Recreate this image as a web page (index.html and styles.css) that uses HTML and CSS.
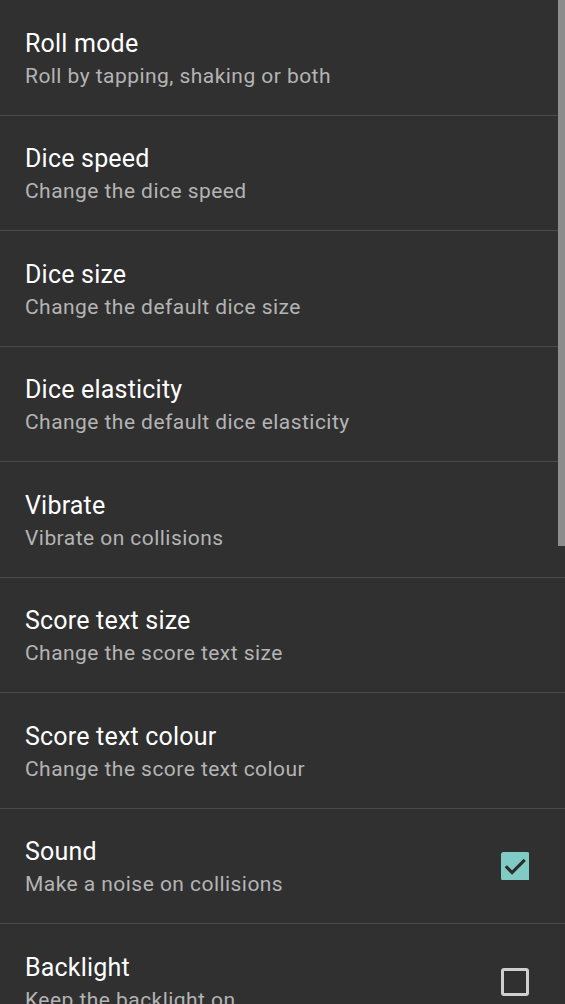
FILE: index.html
```html
<!DOCTYPE html>
<html lang="en">
<head>
<meta charset="utf-8">
<title>Settings</title>
<link rel="stylesheet" href="styles.css">
</head>
<body>
<div class="screen">
  <ul class="prefs">
    <li class="pref"><div class="text"><div class="title">Roll mode</div><div class="summary">Roll by tapping, shaking or both</div></div></li>
    <li class="pref"><div class="text"><div class="title">Dice speed</div><div class="summary">Change the dice speed</div></div></li>
    <li class="pref"><div class="text"><div class="title">Dice size</div><div class="summary">Change the default dice size</div></div></li>
    <li class="pref"><div class="text"><div class="title">Dice elasticity</div><div class="summary">Change the default dice elasticity</div></div></li>
    <li class="pref"><div class="text"><div class="title">Vibrate</div><div class="summary">Vibrate on collisions</div></div></li>
    <li class="pref"><div class="text"><div class="title">Score text size</div><div class="summary">Change the score text size</div></div></li>
    <li class="pref"><div class="text"><div class="title">Score text colour</div><div class="summary">Change the score text colour</div></div></li>
    <li class="pref"><div class="text"><div class="title">Sound</div><div class="summary">Make a noise on collisions</div></div>
      <svg class="check" viewBox="0 0 18 18" aria-hidden="true"><rect x="0" y="0" width="18" height="18" rx="1.6" fill="#80cbc4"/><polyline points="3,9 7,13 15,5" fill="none" stroke="#2c2c2c" stroke-width="2"/></svg>
    </li>
    <li class="pref"><div class="text"><div class="title">Backlight</div><div class="summary">Keep the backlight on</div></div>
      <span class="box"></span>
    </li>
  </ul>
  <div class="scrollthumb"></div>
</div>
</body>
</html>
```

FILE: styles.css
```css
html, body {
  margin: 0;
  padding: 0;
  background: #303030;
  height: 100%;
  overflow: hidden;
}
body {
  font-family: Roboto, "Noto Sans", sans-serif;
}
.screen {
  position: relative;
  height: 1004px;
  overflow: hidden;
}
.prefs {
  list-style: none;
  margin: 0;
  padding: 0;
}
.pref {
  box-sizing: border-box;
  height: 115.5px;
  display: flex;
  align-items: center;
  justify-content: space-between;
  padding: 0 36px 0 25px;
  border-bottom: 1.5px solid #4a4a4a;
}
.text {
  display: flex;
  flex-direction: column;
  padding-top: 3px;
}
.title {
  font-size: 25px;
  line-height: 32px;
  letter-spacing: 0.2px;
  color: #ffffff;
}
.summary {
  font-size: 21px;
  line-height: 28px;
  letter-spacing: 0.45px;
  margin-top: 1.6px;
  color: #b4b4b4;
}
.check {
  width: 28.5px;
  height: 28.5px;
  flex: none;
}
.box {
  box-sizing: border-box;
  width: 28.5px;
  height: 28.5px;
  border: 3px solid #cfcfcf;
  border-radius: 3px;
  flex: none;
}
.pref:last-child {
  border-bottom: none;
}
.scrollthumb {
  position: absolute;
  top: 0;
  right: 0;
  width: 7px;
  height: 546px;
  background: #8c8c8c;
}
```
